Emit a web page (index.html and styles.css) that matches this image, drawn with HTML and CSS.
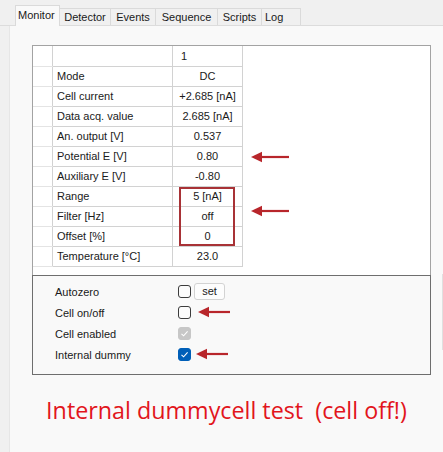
FILE: index.html
```html
<!DOCTYPE html>
<html>
<head>
<meta charset="utf-8">
<link rel="stylesheet" href="styles.css">
</head>
<body>
<div class="tabs">
  <div class="tab active w-mon">Monitor</div>
  <div class="tab w-det">Detector</div>
  <div class="tab w-evt">Events</div>
  <div class="tab w-seq">Sequence</div>
  <div class="tab w-scr">Scripts</div>
  <div class="tab w-log">Log</div>
</div>
<div class="page">
  <div class="panel">
    <div class="gridbox">
      <table class="grid">
        <tr class="head"><td class="rh"></td><td class="name"></td><td class="val hd">1</td></tr>
        <tr><td class="rh"></td><td class="name">Mode</td><td class="val">DC</td></tr>
        <tr><td class="rh"></td><td class="name">Cell current</td><td class="val">+2.685 [nA]</td></tr>
        <tr><td class="rh"></td><td class="name">Data acq. value</td><td class="val">2.685 [nA]</td></tr>
        <tr><td class="rh"></td><td class="name">An. output [V]</td><td class="val">0.537</td></tr>
        <tr><td class="rh"></td><td class="name">Potential E [V]</td><td class="val">0.80</td></tr>
        <tr><td class="rh"></td><td class="name">Auxiliary E [V]</td><td class="val">-0.80</td></tr>
        <tr><td class="rh"></td><td class="name">Range</td><td class="val">5 [nA]</td></tr>
        <tr><td class="rh"></td><td class="name">Filter [Hz]</td><td class="val">off</td></tr>
        <tr><td class="rh"></td><td class="name">Offset [%]</td><td class="val">0</td></tr>
        <tr><td class="rh"></td><td class="name">Temperature [°C]</td><td class="val">23.0</td></tr>
      </table>
      <div class="redbox"></div>
      <svg class="arrow a1" width="40" height="12" viewBox="0 0 40 12"><path d="M38 6H6" stroke="#b8262b" stroke-width="2.2"/><path d="M0 6L11 0.8V11.2Z" fill="#b8262b"/></svg>
      <svg class="arrow a2" width="40" height="12" viewBox="0 0 40 12"><path d="M38 6H6" stroke="#b8262b" stroke-width="2.2"/><path d="M0 6L11 0.8V11.2Z" fill="#b8262b"/></svg>
    </div>
    <div class="opts">
      <div class="opt"><span class="lbl">Autozero</span><span class="cb"></span><span class="btn">set</span></div>
      <div class="opt"><span class="lbl">Cell on/off</span><span class="cb"></span>
        <svg class="arrow a3" width="33" height="12" viewBox="0 0 33 12"><path d="M32 6H6" stroke="#b8262b" stroke-width="2.2"/><path d="M0 6L11 0.8V11.2Z" fill="#b8262b"/></svg></div>
      <div class="opt"><span class="lbl">Cell enabled</span><span class="cb dis"><svg width="13" height="13" viewBox="0 0 13 13"><path d="M3.5 6.8L5.6 8.8L9.6 4.4" fill="none" stroke="#fff" stroke-width="1.1"/></svg></span></div>
      <div class="opt"><span class="lbl">Internal dummy</span><span class="cb on"><svg width="13" height="13" viewBox="0 0 13 13"><path d="M3.5 6.8L5.6 8.8L9.6 4.4" fill="none" stroke="#fff" stroke-width="1.1"/></svg></span>
        <svg class="arrow a4" width="33" height="12" viewBox="0 0 33 12"><path d="M32 6H6" stroke="#b8262b" stroke-width="2.2"/><path d="M0 6L11 0.8V11.2Z" fill="#b8262b"/></svg></div>
    </div>
  </div>
  <div class="note">Internal dummycell test &nbsp;(cell off!)</div>
  <div class="edge"></div>
</div>
</body>
</html>
```
FILE: styles.css
```css
html, body {
  margin: 0;
  padding: 0;
}
body {
  width: 443px;
  height: 452px;
  overflow: hidden;
  background: #f0f0f0;
  font-family: "Liberation Sans", Arial, sans-serif;
  font-size: 11px;
  color: #1a1a1a;
}
.tabs {
  display: flex;
  align-items: flex-end;
  height: 26px;
  padding-left: 15px;
  box-sizing: border-box;
  border-bottom: 1px solid #dcdcdc;
}
.tab {
  height: 16px;
  line-height: 16px;
  border: 1px solid #dadada;
  border-bottom: none;
  border-left: none;
  background: #f0f0f0;
  text-align: center;
  box-sizing: content-box;
}
.tab.active {
  height: 20px;
  line-height: 18px;
  background: #f9f9f9;
  border-left: 1px solid #dadada;
  margin-bottom: -1px;
  text-align: left;
  padding-left: 2px;
}
.w-mon { width: 41px; }
.w-det { width: 50px; }
.w-evt { width: 44px; }
.w-seq { width: 61px; }
.w-scr { width: 43px; }
.w-log { width: 38px; text-align: left; text-indent: 3px; }

.page {
  margin-left: 9px;
  height: 426px;
  background: #f9f9f9;
  border-left: 1px solid #e6e6e6;
  padding-top: 19px;
  padding-left: 22px;
  box-sizing: border-box;
  position: relative;
}
.panel {
  width: 399px;
}
.gridbox {
  position: relative;
  height: 229px;
  background: #fff;
  border: 1px solid #a3a3a3;
  border-bottom: none;
}
.grid {
  border-collapse: collapse;
  table-layout: fixed;
}
.grid td {
  padding: 0;
  height: 19px;
  border-right: 1px solid #d2d2d2;
  border-bottom: 1px solid #d2d2d2;
  white-space: nowrap;
  line-height: 19px;
}
.grid tr.head td {
  height: 20px;
  line-height: 20px;
}
.grid .rh {
  width: 19px;
  border-bottom-color: #e4e4e4;
}
.grid .name {
  width: 120px;
  padding-left: 4px;
  box-sizing: border-box;
}
.grid .val {
  width: 69px;
  text-align: center;
}
.grid .val.hd {
  text-align: left;
  text-indent: 8px;
}
.redbox {
  position: absolute;
  left: 146px;
  top: 141px;
  width: 52px;
  height: 55px;
  border: 2px solid #a83236;
}
.arrow {
  position: absolute;
}
.a1 { left: 218px; top: 105px; }
.a2 { left: 218px; top: 159px; }

.opts {
  height: 93px;
  border: 1px solid #6e6e6e;
  background: #f9f9f9;
  padding-top: 5px;
}
.opt {
  position: relative;
  display: flex;
  align-items: center;
  height: 21px;
  padding-left: 22px;
}
.lbl {
  width: 123px;
}
.cb {
  width: 11px;
  height: 11px;
  border: 1px solid #3c3c3c;
  border-radius: 3px;
  background: #fbfbfb;
  display: flex;
}
.cb svg {
  margin: -1px;
}
.cb.dis {
  background: #c7c7c7;
  border-color: #c7c7c7;
}
.cb.on {
  background: #005fb8;
  border-color: #005fb8;
}
.btn {
  margin-left: 3px;
  width: 29px;
  height: 15px;
  line-height: 15px;
  text-align: center;
  border: 1px solid #d3d3d3;
  border-radius: 3px;
  background: #fdfdfd;
}
.a3 { left: 165px; top: 4px; }
.a4 { left: 163px; top: 4px; }

.note {
  margin-top: 19px;
  margin-left: -22px;
  text-align: center;
  font-family: "Open Sans", sans-serif;
  font-size: 23.3px;
  color: #e2151c;
}
.edge {
  position: absolute;
  right: 0;
  top: 248px;
  width: 1px;
  height: 76px;
  background: #e0e0e0;
}
```
